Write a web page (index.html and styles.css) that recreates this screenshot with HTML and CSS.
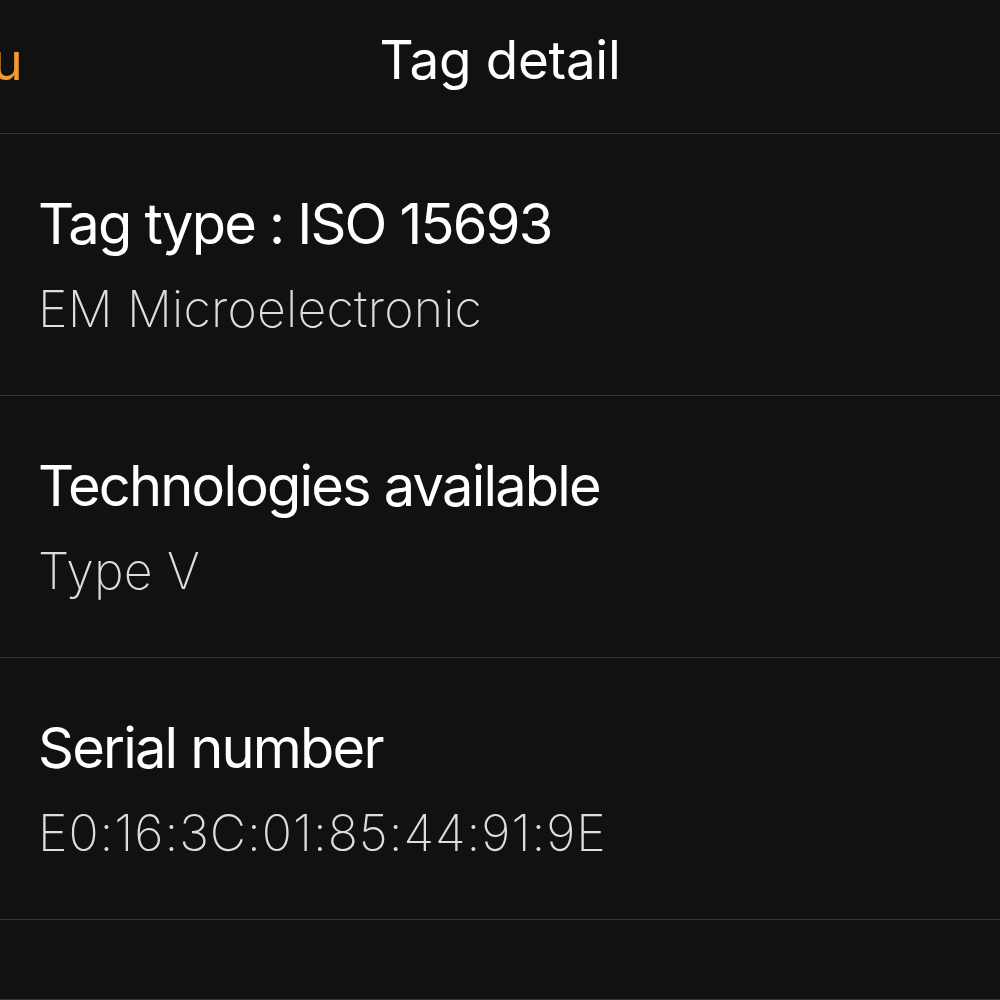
FILE: index.html
```html
<!DOCTYPE html>
<html lang="en">
<head>
  <meta charset="UTF-8" />
  <title>Tag detail</title>
  <link rel="stylesheet" href="styles.css">
</head>
<body>

  <div class="navbar">
    <span class="back">Menu</span>
    <h1>Tag detail</h1>
  </div>

  <div class="list">
    <div class="row">
      <div class="title">Tag type : ISO 15693</div>
      <div class="value">EM Microelectronic</div>
    </div>
    <div class="row">
      <div class="title">Technologies available</div>
      <div class="value">Type V</div>
    </div>
    <div class="row">
      <div class="title">Serial number</div>
      <div class="value serial">E0:16:3C:01:85:44:91:9E</div>
    </div>
  </div>

  <div class="footer"></div>

</body>
</html>
```

FILE: styles.css
```css
body {
  margin: 0;
  background-color: #111111;
  color: #ffffff;
  font-family: Inter, "Noto Sans", sans-serif;
  height: 1000px;
  overflow: hidden;
}

.navbar {
  position: relative;
  height: 133px;
  display: flex;
  align-items: center;
  justify-content: center;
  border-bottom: 1px solid #333333;
}

.navbar h1 {
  margin: 0;
  font-size: 53px;
  font-weight: 400;
  margin-top: -14px;
  letter-spacing: -0.3px;
}

.back {
  position: absolute;
  left: -116px;
  top: 30px;
  font-size: 52px;
  color: #f29a2e;
}

.row {
  height: 262px;
  box-sizing: border-box;
  padding: 54px 38px 0;
  border-bottom: 1px solid #333333;
}

.title {
  font-size: 56px;
  font-weight: 400;
  line-height: 72px;
  letter-spacing: -1.8px;
}

.value {
  font-size: 50px;
  font-weight: 200;
  color: #dddddd;
  line-height: 72px;
  margin-top: 13px;
  letter-spacing: 0.2px;
}

.serial {
  letter-spacing: 0.95px;
}

.footer {
  height: 79px;
  border-bottom: 1px solid #333333;
}
```
